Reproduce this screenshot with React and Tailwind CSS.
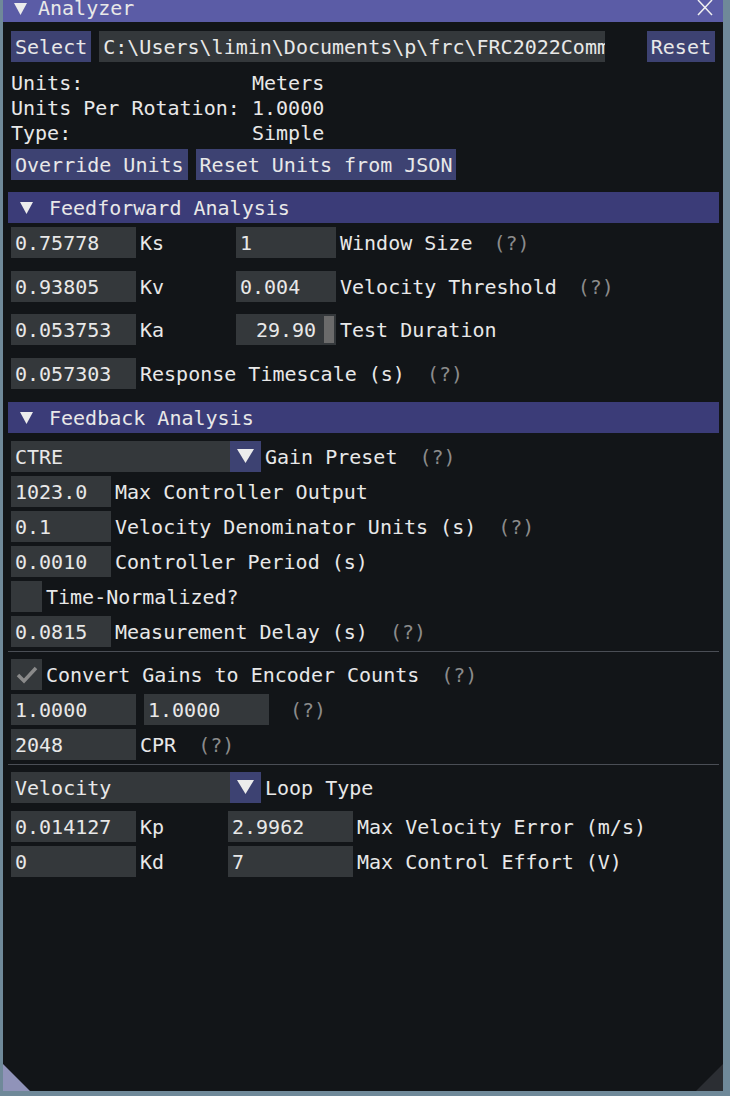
import React from "react";

const Frame = ({ w, children, className = "" }) => (
  <div className={`h-[31px] bg-[#34383b] flex items-center pl-[4px] overflow-hidden whitespace-pre shrink-0 ${w} ${className}`}>
    {children}
  </div>
);

const Btn = ({ children, className = "" }) => (
  <div className={`h-[31px] bg-[#3d4272] flex items-center px-[4px] whitespace-pre shrink-0 ${className}`}>
    {children}
  </div>
);

const Help = ({ className = "ml-[22px]" }) => (
  <span className={`text-[#8b8b8b] whitespace-pre ${className}`}>(?)</span>
);

const Label = ({ children, className = "" }) => (
  <span className={`whitespace-pre ${className}`}>{children}</span>
);

const Row = ({ mt, children }) => (
  <div className={`h-[31px] flex items-center ${mt}`}>{children}</div>
);

const Tri = ({ className = "" }) => (
  <svg width="13" height="12" viewBox="0 0 13 12" className={className}>
    <polygon points="0,0 13,0 6.5,12" fill="#ececec" />
  </svg>
);

const Header = ({ mt, title }) => (
  <div className={`h-[31px] bg-[#3b3c78] ml-[-3px] mr-[-4px] flex items-center ${mt}`}>
    <Tri className="ml-[12px]" />
    <span className="ml-[16px] whitespace-pre">{title}</span>
  </div>
);

const Combo = ({ value }) => (
  <div className="h-[31px] w-[250px] flex shrink-0">
    <div className="flex-1 bg-[#34383b] flex items-center pl-[4px]">{value}</div>
    <div className="w-[31px] bg-[#3d4272] flex items-center justify-center">
      <svg width="17" height="15" viewBox="0 0 17 15">
        <polygon points="0,0 17,0 8.5,14" fill="#ececec" />
      </svg>
    </div>
  </div>
);

const Check = ({ checked }) => (
  <div className="h-[31px] w-[31px] bg-[#34383b] flex items-center justify-center shrink-0">
    {checked && (
      <svg width="22" height="18" viewBox="0 0 22 18">
        <polyline points="2,9 8,15 20,2" fill="none" stroke="#8a8a8a" strokeWidth="3.5" />
      </svg>
    )}
  </div>
);

const Sep = ({ mt }) => (
  <div className={`h-[1px] bg-[#4a4e55] ml-[-3px] mr-[-4px] ${mt}`} />
);

export default function App() {
  return (
    <div className="w-[730px] h-[1096px] bg-[#6f8999] overflow-hidden font-['DejaVu_Sans_Mono',monospace] text-[20px] text-[#e8e8e8]">
      <div className="ml-[3px] w-[720px] h-[1091px] bg-[#121518] flex flex-col relative">
        {/* Title bar */}
        <div className="h-[22px] bg-[#5b5ca6] flex items-start overflow-hidden shrink-0">
          <Tri className="ml-[11px] mt-[3px]" />
          <span className="ml-[11px] leading-[16px]">Analyzer</span>
          <svg width="16" height="16" viewBox="0 0 16 16" className="ml-auto mr-[10px]">
            <line x1="1" y1="0" x2="15" y2="15" stroke="#f0f0f0" strokeWidth="1.5" />
            <line x1="15" y1="0" x2="1" y2="15" stroke="#f0f0f0" strokeWidth="1.5" />
          </svg>
        </div>

        {/* Body */}
        <div className="px-[8px] flex flex-col">
          <Row mt="mt-[9px]">
            <Btn>Select</Btn>
            <div className="h-[31px] w-[506px] ml-[8px] bg-[#34383b] flex items-center pl-[4px] shrink-0">
              <span className="block w-full overflow-hidden whitespace-pre">C:\Users\limin\Documents\p\frc\FRC2022Comm</span>
            </div>
            <Btn className="ml-auto">Reset</Btn>
          </Row>

          <div className="mt-[8px] flex flex-col">
            <div className="h-[25px] flex items-center"><span className="w-[241px]">Units:</span><span>Meters</span></div>
            <div className="h-[25px] flex items-center"><span className="w-[241px] whitespace-pre">Units Per Rotation:</span><span>1.0000</span></div>
            <div className="h-[25px] flex items-center"><span className="w-[241px]">Type:</span><span>Simple</span></div>
          </div>

          <Row mt="mt-[4px]">
            <Btn>Override Units</Btn>
            <Btn className="ml-[8px]">Reset Units from JSON</Btn>
          </Row>

          <Header mt="mt-[12px]" title="Feedforward Analysis" />

          <Row mt="mt-[4px]">
            <Frame w="w-[125px]">0.75778</Frame>
            <Label className="ml-[4px] w-[96px]">Ks</Label>
            <Frame w="w-[100px]">1</Frame>
            <Label className="ml-[4px]">Window Size</Label>
            <Help className="ml-[21px]" />
          </Row>
          <Row mt="mt-[13px]">
            <Frame w="w-[125px]">0.93805</Frame>
            <Label className="ml-[4px] w-[96px]">Kv</Label>
            <Frame w="w-[100px]">0.004</Frame>
            <Label className="ml-[4px]">Velocity Threshold</Label>
            <Help className="ml-[21px]" />
          </Row>
          <Row mt="mt-[12px]">
            <Frame w="w-[125px]">0.053753</Frame>
            <Label className="ml-[4px] w-[96px]">Ka</Label>
            <div className="h-[31px] w-[100px] bg-[#34383b] flex items-center justify-center relative shrink-0">
              <span>29.90</span>
              <div className="absolute right-[2px] top-[2px] w-[10px] h-[27px] bg-[#6b6b6b]" />
            </div>
            <Label className="ml-[4px]">Test Duration</Label>
          </Row>
          <Row mt="mt-[13px]">
            <Frame w="w-[125px]">0.057303</Frame>
            <Label className="ml-[4px]">Response Timescale (s)</Label>
            <Help className="ml-[22px]" />
          </Row>

          <Header mt="mt-[13px]" title="Feedback Analysis" />

          <Row mt="mt-[8px]">
            <Combo value="CTRE" />
            <Label className="ml-[4px]">Gain Preset</Label>
            <Help />
          </Row>
          <Row mt="mt-[4px]">
            <Frame w="w-[100px]">1023.0</Frame>
            <Label className="ml-[4px]">Max Controller Output</Label>
          </Row>
          <Row mt="mt-[4px]">
            <Frame w="w-[100px]">0.1</Frame>
            <Label className="ml-[4px]">Velocity Denominator Units (s)</Label>
            <Help className="ml-[22px]" />
          </Row>
          <Row mt="mt-[4px]">
            <Frame w="w-[100px]">0.0010</Frame>
            <Label className="ml-[4px]">Controller Period (s)</Label>
          </Row>
          <Row mt="mt-[4px]">
            <Check />
            <Label className="ml-[4px]">Time-Normalized?</Label>
          </Row>
          <Row mt="mt-[4px]">
            <Frame w="w-[100px]">0.0815</Frame>
            <Label className="ml-[4px]">Measurement Delay (s)</Label>
            <Help className="ml-[22px]" />
          </Row>

          <Sep mt="mt-[4px]" />

          <Row mt="mt-[7px]">
            <Check checked />
            <Label className="ml-[4px]">Convert Gains to Encoder Counts</Label>
            <Help />
          </Row>
          <Row mt="mt-[4px]">
            <Frame w="w-[125px]">1.0000</Frame>
            <Frame w="w-[125px]" className="ml-[8px]">1.0000</Frame>
            <Help className="ml-[21px]" />
          </Row>
          <Row mt="mt-[4px]">
            <Frame w="w-[125px]">2048</Frame>
            <Label className="ml-[4px]">CPR</Label>
            <Help className="ml-[22px]" />
          </Row>

          <Sep mt="mt-[4px]" />

          <Row mt="mt-[7px]">
            <Combo value="Velocity" />
            <Label className="ml-[4px]">Loop Type</Label>
          </Row>
          <Row mt="mt-[8px]">
            <Frame w="w-[125px]">0.014127</Frame>
            <Label className="ml-[4px] w-[88px]">Kp</Label>
            <Frame w="w-[125px]">2.9962</Frame>
            <Label className="ml-[4px]">Max Velocity Error (m/s)</Label>
          </Row>
          <Row mt="mt-[4px]">
            <Frame w="w-[125px]">0</Frame>
            <Label className="ml-[4px] w-[88px]">Kd</Label>
            <Frame w="w-[125px]">7</Frame>
            <Label className="ml-[4px]">Max Control Effort (V)</Label>
          </Row>
        </div>

        {/* Resize grips */}
        <svg width="28" height="27" viewBox="0 0 28 27" className="absolute left-0 bottom-0">
          <polygon points="0,0 27,27 0,27" fill="#9093b9" />
        </svg>
        <svg width="27" height="27" viewBox="0 0 27 27" className="absolute right-0 bottom-0">
          <polygon points="27,0 27,27 0,27" fill="#2b2e33" />
        </svg>
      </div>
    </div>
  );
}
